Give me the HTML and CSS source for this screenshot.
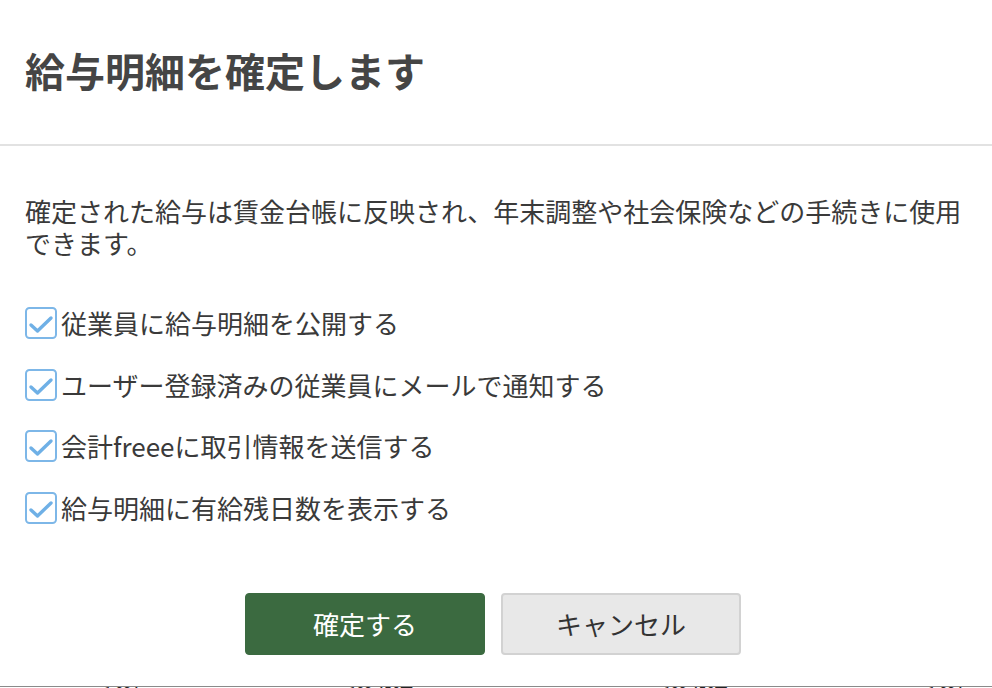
FILE: index.html
```html
<!DOCTYPE html>
<html lang="ja">
<head>
<meta charset="utf-8">
<title>給与明細を確定します</title>
<link rel="stylesheet" href="styles.css">
</head>
<body>
<div class="modal">
  <header class="modal-header">
    <h1 class="modal-title">給与明細を確定します</h1>
  </header>
  <section class="modal-body">
    <p class="desc">確定された給与は賃金台帳に反映され、年末調整や社会保険などの手続きに使用できます。</p>
    <ul class="options">
      <li class="option"><span class="check"><svg viewBox="0 0 32 32" width="32" height="32"><rect x="1" y="1" width="30" height="30" rx="3.5" fill="#fff" stroke="#7db7e8" stroke-width="2"/><path d="M6 18 L12.5 24 L26 11" fill="none" stroke="#6fb0e6" stroke-width="3.4" stroke-linecap="round" stroke-linejoin="round"/></svg></span><span class="label">従業員に給与明細を公開する</span></li>
      <li class="option"><span class="check"><svg viewBox="0 0 32 32" width="32" height="32"><rect x="1" y="1" width="30" height="30" rx="3.5" fill="#fff" stroke="#7db7e8" stroke-width="2"/><path d="M6 18 L12.5 24 L26 11" fill="none" stroke="#6fb0e6" stroke-width="3.4" stroke-linecap="round" stroke-linejoin="round"/></svg></span><span class="label">ユーザー登録済みの従業員にメールで通知する</span></li>
      <li class="option"><span class="check"><svg viewBox="0 0 32 32" width="32" height="32"><rect x="1" y="1" width="30" height="30" rx="3.5" fill="#fff" stroke="#7db7e8" stroke-width="2"/><path d="M6 18 L12.5 24 L26 11" fill="none" stroke="#6fb0e6" stroke-width="3.4" stroke-linecap="round" stroke-linejoin="round"/></svg></span><span class="label">会計freeeに取引情報を送信する</span></li>
      <li class="option"><span class="check"><svg viewBox="0 0 32 32" width="32" height="32"><rect x="1" y="1" width="30" height="30" rx="3.5" fill="#fff" stroke="#7db7e8" stroke-width="2"/><path d="M6 18 L12.5 24 L26 11" fill="none" stroke="#6fb0e6" stroke-width="3.4" stroke-linecap="round" stroke-linejoin="round"/></svg></span><span class="label">給与明細に有給残日数を表示する</span></li>
    </ul>
    <div class="actions">
      <button class="btn btn-primary">確定する</button>
      <button class="btn btn-secondary">キャンセル</button>
    </div>
  </section>
</div>
<div class="behind">
  <span class="behind-cell c1">1,234</span>
  <span class="behind-cell c2">123,456円</span>
  <span class="behind-cell c3">123,456円</span>
  <span class="behind-cell c4">1,234</span>
</div>
</body>
</html>
```
FILE: styles.css
```css
html, body {
  margin: 0;
  padding: 0;
  height: 688px;
  overflow: hidden;
  background: #fff;
}
body {
  font-family: "Noto Sans CJK JP", "Noto Sans", sans-serif;
  color: #333;
  display: flex;
  flex-direction: column;
}
.modal {
  height: 686px;
  flex-shrink: 0;
  display: flex;
  flex-direction: column;
}
.modal-header {
  padding: 40px 25px 44px;
  border-bottom: 2px solid #e2e2e2;
}
.modal-title {
  margin: 0;
  font-size: 40px;
  line-height: 60px;
  font-weight: 700;
  color: #454545;
}
.modal-body {
  padding: 49px 25px 0;
}
.desc {
  margin: 0;
  font-size: 26px;
  line-height: 32px;
  color: #3a3a3a;
}
.options {
  list-style: none;
  margin: 46px 0 0;
  padding: 0;
  display: flex;
  flex-direction: column;
  gap: 25.6px;
}
.option {
  display: flex;
  align-items: center;
  height: 36px;
}
.check {
  display: flex;
  width: 32px;
  height: 32px;
  margin-right: 4px;
}
.label {
  font-size: 26px;
  line-height: 36px;
  color: #3a3a3a;
}
.actions {
  display: flex;
  justify-content: center;
  gap: 16px;
  margin-top: 67px;
  padding-right: 6px;
}
.btn {
  width: 240px;
  height: 62px;
  border-radius: 4px;
  font-family: inherit;
  font-size: 26px;
  padding: 0;
  cursor: pointer;
}
.btn-primary {
  background: #3b6a40;
  color: #fff;
  border: 1px solid #3b6a40;
}
.btn-secondary {
  background: #e8e8e8;
  color: #333;
  border: 2px solid #d2d2d2;
}
.behind {
  flex-shrink: 0;
  border-top: 1px solid #8a8a8a;
  height: 20px;
  display: flex;
  font-size: 14px;
  line-height: 14px;
  color: #222;
}
.behind-cell {
  display: block;
  margin-top: -2px;
}
.c1 { margin-left: 104px; }
.c2 { margin-left: 210px; }
.c3 { margin-left: 250px; }
.c4 { margin-left: 200px; }
```
